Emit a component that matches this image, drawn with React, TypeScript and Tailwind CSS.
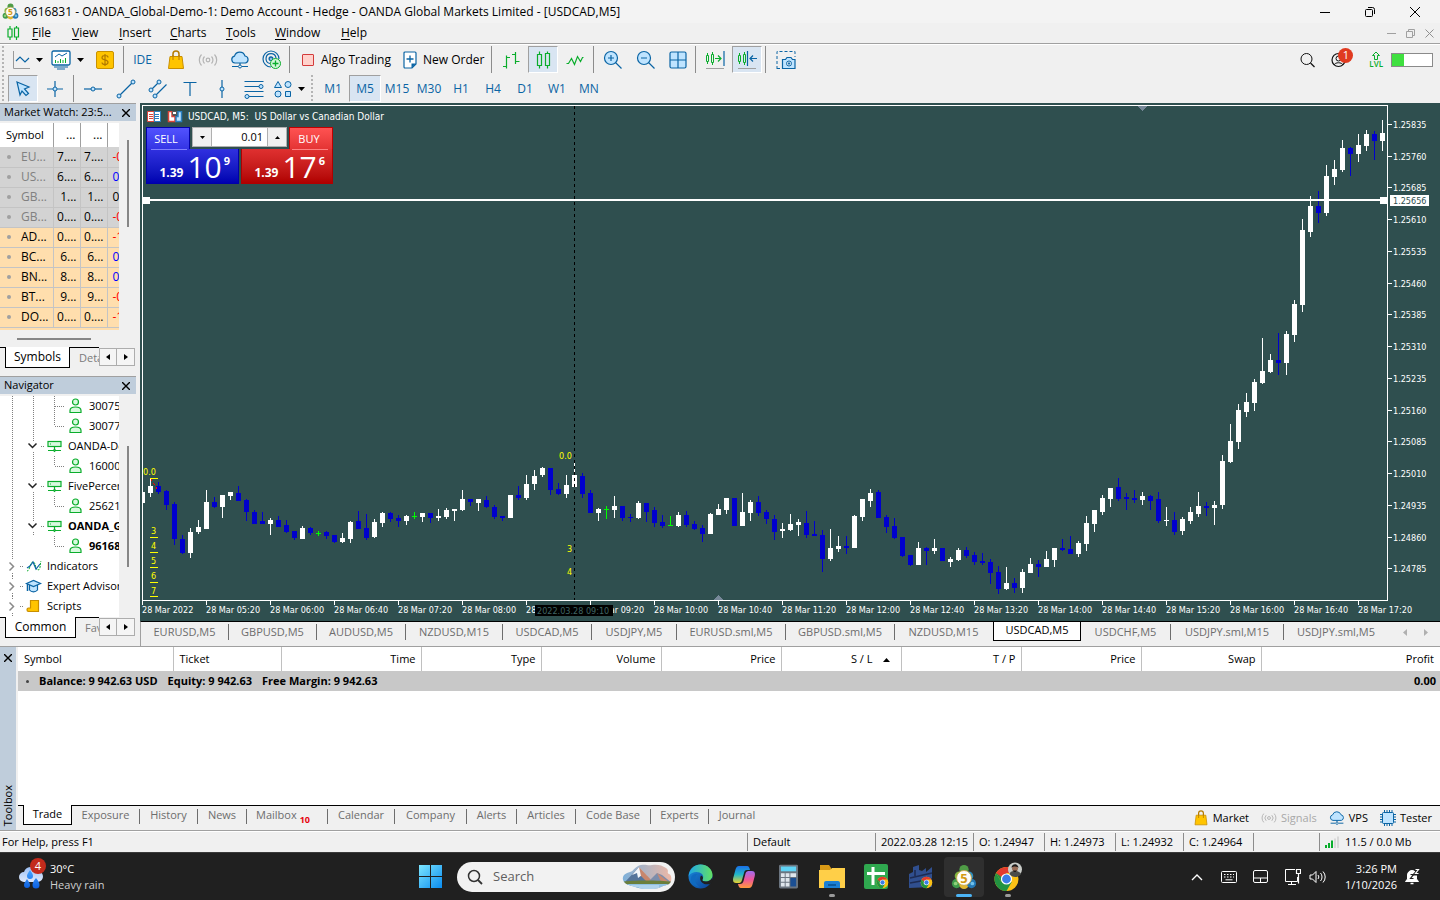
import React from 'react';

type Candle = [string, number, number, number, number];

// kind (W up, B down, G doji), high, body top, body bottom, low
const CANDLES: Candle[] = [
  ['W', 492, 492, 503, 503], ['W', 478, 486, 493, 497], ['B', 482, 486, 492, 494], ['B', 490, 491, 505, 510],
  ['B', 502, 504, 539, 545], ['B', 535, 539, 553, 554], ['W', 528, 532, 553, 558], ['W', 520, 527, 532, 534],
  ['W', 490, 502, 529, 529], ['B', 497, 502, 507, 508], ['W', 495, 495, 507, 518], ['W', 492, 492, 496, 500],
  ['B', 486, 493, 501, 501], ['B', 499, 500, 512, 521], ['B', 510, 512, 524, 524], ['B', 512, 521, 524, 524],
  ['W', 518, 520, 524, 535], ['B', 516, 520, 527, 527], ['B', 520, 525, 532, 533], ['B', 531, 531, 538, 540],
  ['W', 526, 528, 539, 539], ['B', 527, 528, 533, 535], ['G', 531, 533, 534, 536], ['B', 531, 532, 536, 539],
  ['B', 535, 535, 542, 543], ['W', 533, 538, 542, 543], ['W', 521, 522, 539, 543], ['B', 511, 521, 529, 529],
  ['B', 514, 528, 538, 540], ['W', 519, 522, 537, 538], ['W', 512, 513, 523, 527], ['B', 512, 513, 519, 522],
  ['B', 515, 518, 521, 527], ['W', 515, 516, 521, 525], ['G', 512, 516, 517, 519], ['W', 513, 513, 517, 522],
  ['B', 513, 513, 518, 523], ['W', 509, 516, 518, 521], ['W', 508, 510, 517, 519], ['W', 509, 509, 511, 521],
  ['W', 490, 499, 510, 511], ['B', 499, 499, 502, 506], ['W', 499, 499, 503, 511], ['B', 496, 500, 507, 508],
  ['B', 505, 507, 517, 519], ['B', 516, 516, 518, 521], ['W', 495, 495, 518, 518], ['B', 486, 495, 498, 500],
  ['W', 475, 484, 498, 500], ['W', 470, 476, 484, 490], ['W', 467, 468, 475, 477], ['B', 468, 468, 490, 495],
  ['B', 483, 489, 494, 495], ['W', 475, 485, 494, 498], ['W', 463, 475, 487, 487], ['B', 473, 476, 494, 498],
  ['B', 490, 493, 513, 513], ['W', 508, 509, 513, 521], ['G', 506, 509, 510, 519], ['W', 496, 506, 510, 518],
  ['B', 506, 506, 518, 521], ['B', 514, 517, 518, 522], ['W', 501, 503, 518, 519], ['B', 503, 503, 512, 522],
  ['B', 507, 510, 523, 527], ['B', 515, 522, 526, 528], ['G', 516, 525, 526, 526], ['W', 512, 515, 526, 527],
  ['B', 511, 515, 525, 527], ['B', 521, 524, 529, 530], ['B', 525, 528, 534, 542], ['W', 513, 514, 534, 534],
  ['W', 504, 509, 515, 515], ['W', 498, 498, 510, 514], ['B', 498, 498, 526, 526], ['W', 493, 512, 526, 526],
  ['W', 500, 502, 513, 521], ['B', 496, 502, 513, 516], ['B', 510, 512, 519, 524], ['B', 515, 519, 532, 540],
  ['W', 523, 529, 531, 538], ['W', 514, 524, 530, 531], ['W', 519, 522, 525, 536], ['B', 511, 523, 535, 538],
  ['B', 521, 534, 536, 536], ['B', 530, 535, 559, 572], ['W', 529, 548, 559, 561], ['W', 536, 546, 549, 552],
  ['B', 536, 546, 548, 554], ['W', 515, 516, 548, 548], ['W', 499, 499, 517, 521], ['W', 489, 493, 501, 507],
  ['B', 490, 492, 518, 518], ['B', 515, 517, 527, 533], ['B', 518, 526, 538, 539], ['B', 537, 537, 556, 557],
  ['B', 555, 555, 565, 566], ['W', 542, 548, 565, 565], ['B', 547, 548, 551, 565], ['W', 539, 548, 551, 554],
  ['B', 548, 548, 561, 561], ['W', 557, 559, 562, 567], ['W', 548, 550, 560, 561], ['B', 547, 550, 556, 558],
  ['B', 552, 555, 562, 565], ['B', 553, 561, 563, 565], ['B', 559, 562, 573, 584], ['B', 566, 572, 589, 594],
  ['W', 567, 583, 589, 590], ['B', 578, 583, 588, 593], ['W', 569, 572, 588, 593], ['W', 558, 564, 573, 573],
  ['B', 560, 564, 567, 577], ['W', 551, 559, 567, 567], ['W', 548, 548, 560, 567], ['B', 539, 548, 550, 551],
  ['B', 536, 549, 554, 554], ['W', 541, 543, 554, 557], ['W', 516, 523, 544, 551], ['W', 510, 510, 524, 532],
  ['W', 495, 498, 512, 515], ['W', 488, 488, 499, 507], ['B', 478, 487, 499, 501], ['B', 493, 497, 499, 510],
  ['B', 490, 498, 500, 503], ['W', 492, 496, 500, 505], ['B', 495, 496, 501, 510], ['B', 492, 499, 521, 523],
  ['W', 507, 520, 521, 526], ['B', 512, 520, 532, 535], ['W', 517, 519, 531, 535], ['W', 507, 512, 521, 524],
  ['W', 492, 506, 514, 517], ['B', 502, 506, 508, 516], ['W', 501, 505, 508, 525], ['W', 455, 461, 505, 509],
  ['W', 424, 441, 462, 463], ['W', 404, 410, 442, 449], ['W', 393, 402, 412, 417], ['W', 379, 382, 403, 411],
  ['W', 338, 371, 383, 384], ['W', 354, 360, 372, 373], ['B', 333, 360, 363, 375], ['W', 331, 334, 363, 375],
  ['W', 300, 304, 335, 342], ['W', 219, 230, 305, 312], ['W', 196, 206, 232, 237], ['B', 191, 206, 213, 223],
  ['W', 165, 176, 213, 216], ['W', 160, 169, 177, 185], ['W', 140, 148, 170, 172], ['B', 147, 148, 154, 176],
  ['W', 134, 145, 154, 162], ['W', 130, 134, 146, 151], ['B', 131, 134, 141, 160], ['W', 120, 133, 141, 151],
];

const CANDLE_FILL: Record<string, string> = { W: '#ffffff', B: '#0000cd', G: '#00ff00' };

const PRICES: [string, number][] = [
  ['1.25835', 124], ['1.25760', 156], ['1.25685', 187], ['1.25610', 219], ['1.25535', 251],
  ['1.25460', 283], ['1.25385', 314], ['1.25310', 346], ['1.25235', 378], ['1.25160', 410],
  ['1.25085', 441], ['1.25010', 473], ['1.24935', 505], ['1.24860', 537], ['1.24785', 568],
];

const TIMES = [
  '28 Mar 2022', '28 Mar 05:20', '28 Mar 06:00', '28 Mar 06:40', '28 Mar 07:20', '28 Mar 08:00', '28 Mar 08:40',
  '28 Mar 09:20', '28 Mar 10:00', '28 Mar 10:40', '28 Mar 11:20', '28 Mar 12:00', '28 Mar 12:40', '28 Mar 13:20',
  '28 Mar 14:00', '28 Mar 14:40', '28 Mar 15:20', '28 Mar 16:00', '28 Mar 16:40', '28 Mar 17:20',
];

const CHART_TABS = [
  { name: 'EURUSD,M5', width: 'w-[88px]' },
  { name: 'GBPUSD,M5', width: 'w-[88px]' },
  { name: 'AUDUSD,M5', width: 'w-[89px]' },
  { name: 'NZDUSD,M15', width: 'w-[97px]' },
  { name: 'USDCAD,M5', width: 'w-[89px]' },
  { name: 'USDJPY,M5', width: 'w-[85px]' },
  { name: 'EURUSD.sml,M5', width: 'w-[109px]' },
  { name: 'GBPUSD.sml,M5', width: 'w-[109px]' },
  { name: 'NZDUSD,M15', width: 'w-[98px]' },
  { name: 'USDCAD,M5', width: 'w-[88px]', active: true },
  { name: 'USDCHF,M5', width: 'w-[90px]' },
  { name: 'USDJPY.sml,M15', width: 'w-[113px]' },
  { name: 'USDJPY.sml,M5', width: 'w-[105px]' },
];

const SYMBOLS = [
  { name: 'EU...', bid: '7....', ask: '7....', change: '-0', tone: 'text-[#ff0000]', off: true },
  { name: 'US...', bid: '6....', ask: '6....', change: '0.', tone: 'text-[#0000ff]', off: true },
  { name: 'GB...', bid: '1...', ask: '1...', change: '0.', tone: 'text-black', off: true },
  { name: 'GB...', bid: '0....', ask: '0....', change: '-0', tone: 'text-[#ff0000]', off: true },
  { name: 'AD...', bid: '0....', ask: '0....', change: '-1', tone: 'text-[#ff0000]' },
  { name: 'BC...', bid: '6...', ask: '6...', change: '0.', tone: 'text-[#0000ff]' },
  { name: 'BN...', bid: '8...', ask: '8...', change: '0.', tone: 'text-[#0000ff]' },
  { name: 'BT...', bid: '9...', ask: '9...', change: '-0', tone: 'text-[#ff0000]' },
  { name: 'DO...', bid: '0....', ask: '0....', change: '-1', tone: 'text-[#ff0000]' },
];

const TREE = [
  { cells: ['v', 'v', 't', 'user'], label: '30075' },
  { cells: ['v', 'v', 'l', 'user'], label: '30077' },
  { cells: ['v', 'open', 'server'], label: 'OANDA-Demo' },
  { cells: ['v', 'v', 'l', 'user'], label: '16000' },
  { cells: ['v', 'open', 'server'], label: 'FivePercent' },
  { cells: ['v', 'v', 'l', 'user'], label: '25621' },
  { cells: ['v', 'open', 'server'], label: 'OANDA_Global', bold: true },
  { cells: ['v', 'none', 'l', 'user'], label: '96168', bold: true },
  { cells: ['closed', 'indicator'], label: 'Indicators' },
  { cells: ['closed', 'expert'], label: 'Expert Advisors' },
  { cells: ['closed', 'script'], label: 'Scripts' },
];

const ORDER_COLUMNS = [
  { name: 'Symbol', width: 'w-[155px]', align: 'text-left' },
  { name: 'Ticket', width: 'w-[108px]', align: 'text-left' },
  { name: 'Time', width: 'w-[140px]', align: 'text-right' },
  { name: 'Type', width: 'w-[120px]', align: 'text-right' },
  { name: 'Volume', width: 'w-[120px]', align: 'text-right' },
  { name: 'Price', width: 'w-[120px]', align: 'text-right' },
  { name: 'S / L', width: 'w-[120px]', align: 'text-right', sorted: true },
  { name: 'T / P', width: 'w-[120px]', align: 'text-right' },
  { name: 'Price', width: 'w-[120px]', align: 'text-right' },
  { name: 'Swap', width: 'w-[120px]', align: 'text-right' },
  { name: 'Profit', width: '', align: 'text-right' },
];

const TOOLBOX_TABS = [
  { name: 'Exposure', width: 'w-[68px]' },
  { name: 'History', width: 'w-[58px]' },
  { name: 'News', width: 'w-[49px]' },
  { name: 'Mailbox', width: 'w-[81px]', count: 10 },
  { name: 'Calendar', width: 'w-[67px]' },
  { name: 'Company', width: 'w-[72px]' },
  { name: 'Alerts', width: 'w-[50px]' },
  { name: 'Articles', width: 'w-[59px]' },
  { name: 'Code Base', width: 'w-[75px]' },
  { name: 'Experts', width: 'w-[58px]' },
  { name: 'Journal', width: 'w-[57px]' },
];

const BLUE = '#0a64a4';
const SKY = '#bfe4ff';
const GREEN = '#0aad2c';

interface IconProps {
  w?: number;
  h?: number;
  box?: string;
  className?: string;
  children: React.ReactNode;
}

function Icon({ w = 20, h = 20, box, className = '', children }: IconProps) {
  return (
    <svg
      width={w}
      height={h}
      viewBox={box || `0 0 ${w} ${h}`}
      fill="none"
      stroke={BLUE}
      className={`shrink-0 ${className}`}
      aria-hidden="true"
    >
      {children}
    </svg>
  );
}

function Caret() {
  return (
    <Icon w={7} h={4}>
      <path d="M0 0h7L3.500 4z" fill="#000" stroke="none" />
    </Icon>
  );
}

function BagIcon({ size = 20 }: { size?: number }) {
  return (
    <Icon w={size} h={size} box="0 0 20 20">
      <path d="M7 8V4a3 3 0 0 1 6 0v4" stroke="#b57b00" strokeWidth="1.500" />
      <path d="M4 6.500h12l1.500 12h-15z" fill="#ffc400" stroke="#c98f00" />
      <path d="M7 10V5M13 10V5" stroke="#b57b00" />
    </Icon>
  );
}

function SignalIcon({ size = 20 }: { size?: number }) {
  return (
    <Icon w={size} h={size} box="0 0 20 20">
      <g stroke="#b4b4b4" strokeWidth="1.200">
        <circle cx="10" cy="10" r="1.800" />
        <path d="M6.500 6.500a5 5 0 0 0 0 7M13.500 6.500a5 5 0 0 1 0 7M3.500 4.500a8 8 0 0 0 0 11M16.500 4.500a8 8 0 0 1 0 11" />
      </g>
    </Icon>
  );
}

function CloudIcon({ size = 20 }: { size?: number }) {
  return (
    <Icon w={size} h={size} box="0 0 20 20">
      <path d="M5 13a3.500 3.500 0 0 1-.5-6.900A5.500 5.500 0 0 1 15 6a3.600 3.600 0 0 1 .5 7z" fill={SKY} strokeWidth="1.200" />
      <path d="M10 13v2M2 16.500h6M12 16.500h6" strokeWidth="1.200" />
      <circle cx="10" cy="16.500" r="1.500" />
    </Icon>
  );
}

function CandlesIcon() {
  return (
    <Icon>
      <path d="M6.500 1.500v3M6.500 15.500v3M14.500 1.500v2M14.500 15.500v3" stroke={GREEN} strokeWidth="1.200" />
      <path d="M4.500 4.500h4v11h-4zM12.500 3.500h4v12h-4z" stroke={GREEN} strokeWidth="1.200" />
    </Icon>
  );
}

function SmallCandles() {
  return (
    <g stroke={GREEN}>
      <path d="M2.500 3v2M2.500 12v2M7.500 2v2M7.500 13v2" />
      <path d="M1.500 5.500h2v6h-2zM6.500 4.500h2v8h-2z" />
    </g>
  );
}

interface ToolProps {
  label: string;
  width: string;
  active?: boolean;
  children: React.ReactNode;
}

function Tool({ label, width, active, children }: ToolProps) {
  return (
    <button
      aria-label={label}
      className={`flex h-full shrink-0 items-center justify-center gap-1.5 ${width} ${active
        ? 'border border-t-[#a0a0a0] border-l-[#a0a0a0] border-r-white border-b-white bg-[#d9e5f2]'
        : ''
        }`}
    >
      {children}
    </button>
  );
}

function Separator() {
  return <span className="mx-px h-full w-px shrink-0 bg-[#8c8c8c]" />;
}

function Grip() {
  return <span className="ml-0.5 mr-1 h-full w-0.5 shrink-0 bg-[repeating-linear-gradient(#b4b4b4_0_2px,transparent_2px_4px)]" />;
}

function MetaLogo({ size }: { size: number }) {
  return (
    <svg width={size} height={size} viewBox="0 0 28 28" className="shrink-0" aria-hidden="true">
      <circle cx="14" cy="6" r="5" fill="#4f9c46" />
      <circle cx="9" cy="13" r="5" fill="#7cb53f" />
      <circle cx="19" cy="13" r="5" fill="#2f8fc0" />
      <circle cx="6" cy="21" r="5" fill="#3f9b4c" />
      <circle cx="14" cy="22" r="5" fill="#e2b72f" />
      <circle cx="22" cy="21" r="5" fill="#2478b5" />
      <circle cx="5" cy="21" r="2" fill="#8fd07a" />
      <circle cx="23" cy="21" r="2" fill="#6fc0ea" />
      <circle cx="14" cy="15" r="8" fill="#fdfdf8" stroke="#c9a648" />
      <text x="14" y="20" textAnchor="middle" fontSize="14" fontWeight="700" fill="#d49a13" fontFamily="Open Sans, sans-serif">5</text>
    </svg>
  );
}

function TitleBar() {
  return (
    <header className="flex h-[23px] shrink-0 items-center bg-[#f3f3f3] text-black">
      <span className="flex w-6 justify-start pl-0.5"><MetaLogo size={17} /></span>
      <h1 className="truncate text-[12px]">
        9616831 - OANDA_Global-Demo-1: Demo Account - Hedge - OANDA Global Markets Limited - [USDCAD,M5]
      </h1>
      <div className="ml-auto flex h-full items-center pr-0.5">
        <button aria-label="Minimize" className="flex w-[45px] justify-center">
          <Icon w={12} h={12}><path d="M1 6.500h10" stroke="#000" /></Icon>
        </button>
        <button aria-label="Restore" className="flex w-[45px] justify-center">
          <Icon w={12} h={12}>
            <rect x="1.500" y="3.500" width="7" height="7" rx="1" stroke="#000" />
            <path d="M4 1.500h4.500a2 2 0 0 1 2 2V8" stroke="#000" />
          </Icon>
        </button>
        <button aria-label="Close" className="flex w-[46px] justify-center">
          <Icon w={12} h={12}><path d="M1 1l10 10M11 1L1 11" stroke="#000" /></Icon>
        </button>
      </div>
    </header>
  );
}

function MenuBar() {
  const items = [
    ['File', 'w-10'], ['View', 'w-[47px]'], ['Insert', 'w-[51px]'], ['Charts', 'w-14'],
    ['Tools', 'w-[49px]'], ['Window', 'w-[66px]'], ['Help', 'w-10'],
  ];
  return (
    <nav className="flex h-[21px] shrink-0 items-center border-b border-[#a0a0a0] bg-[#f0f0f0] text-xs text-black">
      <span className="flex w-8 pl-1.5">
        <Icon w={14} h={16}>
          <path d="M4 1v3M4 12v3M10.500 1v2M10.500 12v3M2 4h4v8H2zM8.500 3h4v9h-4z" stroke={GREEN} strokeWidth="1.200" />
        </Icon>
      </span>
      {items.map(([name, width]) => (
        <button key={name} className={`shrink-0 text-left ${width}`}>
          <u className="underline-offset-2">{name[0]}</u>{name.slice(1)}
        </button>
      ))}
      <div className="ml-auto flex items-center gap-2 pr-[5px]">
        <Icon w={11} h={11}><path d="M1 5.500h9" stroke="#a0a0a0" /></Icon>
        <Icon w={11} h={11}>
          <path d="M1.500 3.500h6v6h-6zM3.500 3V1.500h6v6H8" stroke="#a0a0a0" />
        </Icon>
        <Icon w={11} h={11}><path d="M1.500 1.500l8 8M9.500 1.500l-8 8" stroke="#909090" /></Icon>
      </div>
    </nav>
  );
}

function MainToolbar() {
  return (
    <div className="flex h-[27px] items-center">
      <Grip />
      <Tool label="Line studies" width="w-[39px]">
        <Icon w={18}>
          <path d="M1.500 1v17.500H18" stroke="#9a9a9a" />
          <path d="M4 11l4-4 5 5 4-4" strokeWidth="1.200" />
        </Icon>
        <Caret />
      </Tool>
      <Tool label="Chart templates" width="w-[41px]">
        <Icon w={20}>
          <rect x="1" y="1" width="18" height="14" rx="1.500" fill="#fff" strokeWidth="1.300" />
          <path d="M4 7l4-3 3 2 5-3" />
          <path d="M4.500 10v3M7 11v2M9.500 9v4M12 10v3M14.500 8v5" stroke={GREEN} />
          <path d="M3 17h14M6 19h8" />
        </Icon>
        <Caret />
      </Tool>
      <Tool label="Payments" width="w-[34px]">
        <Icon w={18} h={18}>
          <rect x=".5" y=".5" width="17" height="17" rx="1.500" fill="#ffc400" stroke="#c99200" />
          <path d="M12 6.500c0-1.200-1-2-3-2s-3 .8-3 2.200c0 3 6 1.500 6 4.600 0 1.300-1 2.200-3 2.200s-3-.8-3-2M9 3v12" stroke="#b27a00" strokeWidth="1.200" />
        </Icon>
      </Tool>
      <Separator />
      <Tool label="IDE" width="w-[35px]"><span className="text-[12px] text-[#0a64a4]">IDE</span></Tool>
      <Tool label="Market" width="w-8"><BagIcon /></Tool>
      <Tool label="Signals" width="w-8"><SignalIcon /></Tool>
      <Tool label="VPS" width="w-8"><CloudIcon /></Tool>
      <Tool label="Community" width="w-8">
        <Icon>
          <path d="M9 17a8 8 0 1 1 8-8M8 13.500A5 5 0 1 1 14 8M8 10.500A2 2 0 1 1 11 8.500" strokeWidth="1.200" />
          <circle cx="9" cy="9" r="1.500" fill={SKY} />
          <circle cx="13.500" cy="13.500" r="5" fill="#d6f7dc" stroke={GREEN} />
          <path d="M13.500 10.500v6M10.500 13.500h6" stroke={GREEN} strokeWidth="1.300" />
        </Icon>
      </Tool>
      <Separator />
      <button className="flex h-full w-[103px] shrink-0 items-center gap-[7px] pl-[11px] text-[12px] whitespace-nowrap">
        <span className="h-3 w-3 shrink-0 rounded-[1px] border border-[#d33b3b] bg-[#ffd2cc]" />
        Algo Trading
      </button>
      <button className="flex h-full w-24 shrink-0 items-center gap-1.5 pl-[9px] text-[12px] whitespace-nowrap">
        <Icon w={14} h={18}>
          <path d="M2 1h10a1 1 0 0 1 1 1v11l-4 4H2a1 1 0 0 1-1-1V2a1 1 0 0 1 1-1z" fill="#fff" strokeWidth="1.200" />
          <path d="M7 4.500v7M3.500 8h7" strokeWidth="1.300" />
          <path d="M13 12.500L8.500 17v-4.500z" fill={BLUE} stroke="none" />
        </Icon>
        New Order
      </button>
      <Separator />
      <Tool label="Bar chart" width="w-[35px]">
        <Icon>
          <path d="M5.500 5.500v13M2 16.500h3.500M5.500 7.500H9M14.500 2v12M11 4.500h3.500M14.500 11.500h4" stroke={GREEN} strokeWidth="1.200" />
        </Icon>
      </Tool>
      <Tool label="Candlesticks" width="w-[30px]" active><CandlesIcon /></Tool>
      <Tool label="Line chart" width="w-[34px]">
        <Icon><path d="M1.500 13.500h2l3-5 3 6 3-8 3 5 2-4h1" stroke={GREEN} strokeWidth="1.200" /></Icon>
      </Tool>
      <Separator />
      <Tool label="Zoom in" width="w-9">
        <Icon>
          <circle cx="8" cy="8" r="6.500" fill={SKY} strokeWidth="1.200" />
          <path d="M12.500 12.500l6 6M8 5v6M5 8h6" strokeWidth="1.200" />
        </Icon>
      </Tool>
      <Tool label="Zoom out" width="w-[30px]">
        <Icon>
          <circle cx="8" cy="8" r="6.500" fill={SKY} strokeWidth="1.200" />
          <path d="M12.500 12.500l6 6M5 8h6" strokeWidth="1.200" />
        </Icon>
      </Tool>
      <Tool label="Tile windows" width="w-[33px]">
        <Icon w={18} h={18}>
          <rect x="1" y="1" width="16" height="16" rx="1.500" fill={SKY} strokeWidth="1.200" />
          <path d="M9 1v16M1 9h16" strokeWidth="1.200" />
        </Icon>
      </Tool>
      <Separator />
      <Tool label="Auto scroll" width="w-[35px]">
        <Icon>
          <SmallCandles />
          <path d="M10 8.500h6M13 5.500l3 3-3 3" stroke={GREEN} strokeWidth="1.200" />
          <path d="M19 1v15" strokeWidth="1.200" />
          <path d="M1 18.500h18" stroke="#a0a0a0" />
        </Icon>
      </Tool>
      <Tool label="Chart shift" width="w-[30px]" active>
        <Icon>
          <SmallCandles />
          <path d="M10.500 1v15M13 8.500h7M16 5.500l-3 3 3 3" strokeWidth="1.200" />
          <path d="M1 18.500h18" stroke="#a0a0a0" />
        </Icon>
      </Tool>
      <span className="w-0.5 shrink-0" />
      <Separator />
      <Tool label="Screenshot" width="w-[38px]">
        <Icon>
          <path d="M1 19V1.500h18V7" strokeDasharray="3 2" />
          <path d="M1 18.500h5" strokeDasharray="3 2" />
          <path d="M6.500 9.500h3L11 7.500h4l1.500 2H19v9H6.500z" fill={SKY} strokeWidth="1.200" />
          <circle cx="13" cy="13.500" r="2.500" fill="#fff" />
          <circle cx="13" cy="13.500" r=".8" fill={BLUE} />
        </Icon>
      </Tool>
      <div className="ml-auto flex items-center pr-[7px]">
        <button aria-label="Search" className="mr-4">
          <Icon w={16} h={16}>
            <circle cx="7.500" cy="7" r="5.500" stroke="#111" />
            <path d="M11.500 11l4 4" stroke="#111" strokeWidth="1.300" />
          </Icon>
        </button>
        <button aria-label="Account, 1 notification" className="relative mr-[23px]">
          <Icon w={15} h={16}>
            <circle cx="7.500" cy="8" r="6.500" stroke="#111" strokeWidth="1.200" />
            <circle cx="7.500" cy="6.500" r="2.500" stroke="#111" />
            <path d="M3 13c1-3 8-3 9 0" stroke="#111" />
          </Icon>
          <span className="absolute -top-1 left-[7px] flex h-[15px] w-[15px] items-center justify-center rounded-full bg-[#e03a20] text-[11px] text-white">1</span>
        </button>
        <div className="mr-2 flex flex-col items-center">
          <Icon w={10} h={9}>
            <path d="M5 1l3.500 3.500H6.500v4h-3v-4H1.500z" stroke={GREEN} />
          </Icon>
          <span className="text-[8px] leading-[8px] font-semibold text-[#0aad2c]">LVL</span>
        </div>
        <div className="h-[14px] w-[42px] border border-[#8a8a8a] bg-white">
          <div className="h-full w-3 bg-[#3fe03f]" />
        </div>
      </div>
    </div>
  );
}

function DrawingToolbar() {
  const frames = ['M1', 'M5', 'M15', 'M30', 'H1', 'H4', 'D1', 'W1', 'MN'];
  return (
    <div className="mt-0.5 flex h-[27px] items-center">
      <Grip />
      <Tool label="Cursor" width="w-[30px]" active>
        <Icon w={18} h={18}><path d="M3 2l12 5-4.500 2 4 4.500-2.500 2-4-4.500-2 4z" fill={SKY} strokeWidth="1.200" /></Icon>
      </Tool>
      <Tool label="Crosshair" width="w-[34px]">
        <Icon>
          <path d="M2 10h6M12 10h6M10 2v6M10 12v6" strokeWidth="1.200" />
          <circle cx="10" cy="10" r="2" fill={SKY} />
        </Icon>
      </Tool>
      <Separator />
      <Tool label="Horizontal line" width="w-[35px]">
        <Icon><path d="M1 10h18" strokeWidth="1.200" /><circle cx="10" cy="10" r="2" fill={SKY} /></Icon>
      </Tool>
      <Tool label="Trend line" width="w-8">
        <Icon>
          <path d="M3 17L17 3" strokeWidth="1.200" />
          <circle cx="3" cy="17" r="2" fill={SKY} /><circle cx="17" cy="3" r="2" fill={SKY} />
        </Icon>
      </Tool>
      <Tool label="Channel" width="w-8">
        <Icon>
          <path d="M3 11l8-8M7 17L18.500 5.500" strokeWidth="1.200" />
          <circle cx="3" cy="11" r="2" fill={SKY} /><circle cx="11" cy="3" r="2" fill={SKY} /><circle cx="7" cy="17" r="2" fill={SKY} />
        </Icon>
      </Tool>
      <Tool label="Text" width="w-8">
        <Icon><path d="M3.500 3.500h13M10 3.500V17" strokeWidth="1.200" /></Icon>
      </Tool>
      <Tool label="Vertical line" width="w-8">
        <Icon><path d="M10 1v18" strokeWidth="1.200" /><circle cx="10" cy="10" r="2" fill={SKY} /></Icon>
      </Tool>
      <Tool label="Fibonacci" width="w-8">
        <Icon>
          <path d="M.5 2.500h19M.5 7.500h17M.5 12.500h19M3 17.500h16.500" />
          <circle cx="17" cy="7.500" r="2" fill={SKY} /><circle cx="3" cy="17.500" r="2" fill={SKY} />
        </Icon>
      </Tool>
      <Tool label="Shapes" width="w-[39px]">
        <Icon w={18} h={18}>
          <path d="M4 1.500l3.500 6h-7zM11.500 11.500h5v5h-5z" fill={SKY} />
          <circle cx="14" cy="4.500" r="3" fill={SKY} /><circle cx="4" cy="14" r="3" fill={SKY} />
        </Icon>
        <Caret />
      </Tool>
      <Grip />
      {frames.map((frame) => (
        <Tool key={frame} label={frame} width="w-8" active={frame === 'M5'}>
          <span className="text-[12px] text-[#0a64a4]">{frame}</span>
        </Tool>
      ))}
    </div>
  );
}

function PanelHeader({ title }: { title: string }) {
  return (
    <div className="flex h-[18px] shrink-0 items-center justify-between border-t border-[#a0a0a0] bg-[#bfcddb] pl-1 pr-1.5 text-[11px]">
      <h2 className="truncate">{title}</h2>
      <button aria-label={`Close ${title}`}>
        <Icon w={8} h={8}><path d="M0 0l8 8M8 0L0 8" stroke="#000" strokeWidth="1.400" /></Icon>
      </button>
    </div>
  );
}

function PanelTabs({ active, next, width }: { active: string; next: string; width: string }) {
  return (
    <div className="flex h-[21px] shrink-0 text-[12px]">
      <span className="w-[5px] shrink-0 border-t border-black" />
      <button className={`h-full shrink-0 border border-t-0 border-black bg-white ${width}`}>{active}</button>
      <button className="h-full min-w-0 flex-1 overflow-hidden border-t border-black pl-[9px] text-left text-[11px] text-[#7a7a7a]">{next}</button>
      <div className="mr-px flex h-[19px] shrink-0 pt-px">
        <button aria-label="Previous tab" className="flex h-[18px] w-[18px] items-center justify-center border border-[#adadad] bg-[#f5f5f5]">
          <Icon w={4} h={6}><path d="M4 0v6L0 3z" fill="#000" stroke="none" /></Icon>
        </button>
        <button aria-label="Next tab" className="-ml-px flex h-[18px] w-[19px] items-center justify-center border border-[#adadad] bg-[#f5f5f5]">
          <Icon w={4} h={6}><path d="M0 0v6l4-3z" fill="#000" stroke="none" /></Icon>
        </button>
      </div>
    </div>
  );
}

function MarketWatch() {
  return (
    <section className="flex w-[136px] flex-col">
      <PanelHeader title="Market Watch: 23:5..." />
      <div className="mt-0.5 flex h-[207px]">
        <div className="w-[119px] overflow-hidden bg-[#ffdead]">
          <table className="w-[135px] table-fixed border-collapse text-[12px] leading-4 whitespace-nowrap">
            <thead>
              <tr className="h-6 bg-white">
                <th className="w-[53px] border-r border-[#a0a0a0] pl-1.5 text-left text-[11px] font-normal">Symbol</th>
                <th className="w-[27px] border-r border-[#a0a0a0] pr-1 text-right font-normal">...</th>
                <th className="w-[27px] border-r border-[#a0a0a0] pr-1 text-right font-normal">...</th>
                <th className="w-[28px]" />
              </tr>
            </thead>
            <tbody>
              {SYMBOLS.map((row, i) => (
                <tr key={i} className={`h-5 border-b border-[#c4c4c4] ${row.off ? 'bg-[#d3d3d3]' : 'bg-[#ffdead]'}`}>
                  <td className={`border-r border-[#c4c4c4] ${row.off ? 'text-[#808080]' : 'text-black'}`}>
                    <span className="flex items-center gap-2.5 pl-[7px]">
                      <i className="h-1 w-1 rounded-full bg-[#a0a0a0]" />
                      {row.name}
                    </span>
                  </td>
                  <td className="border-r border-[#c4c4c4] pr-[3px] text-right">{row.bid}</td>
                  <td className="border-r border-[#c4c4c4] pr-[3px] text-right">{row.ask}</td>
                  <td className={`pl-[5px] ${row.tone}`}>{row.change}</td>
                </tr>
              ))}
            </tbody>
          </table>
        </div>
        <div className="ml-2 mt-[17px] h-[87px] w-0.5 bg-[#868686]" />
      </div>
      <div className="ml-[17px] mt-2 h-0.5 w-[74px] bg-[#868686]" />
      <div className="mt-[7px]"><PanelTabs active="Symbols" next="Details" width="w-[65px]" /></div>
    </section>
  );
}

function TreeCell({ kind }: { kind: string }) {
  const dots = { stroke: '#808080', strokeDasharray: '1 1' };
  return (
    <Icon w={21} h={20}>
      {kind === 'v' && <path d="M10.500 0v20" {...dots} />}
      {kind === 't' && <path d="M10.500 0v20M11 10.500h10" {...dots} />}
      {kind === 'l' && <path d="M10.500 0v10M11 10.500h10" {...dots} />}
      {kind === 'open' && (
        <>
          <path d="M10.500 0v5M10.500 16v4M18 10.500h3" {...dots} />
          <path d="M5.500 7.500l4 4 4-4" stroke="#222" strokeWidth="1.500" />
        </>
      )}
      {kind === 'closed' && (
        <>
          <path d="M10.500 0v4M10.500 17v3M18 10.500h3" {...dots} />
          <path d="M7.500 6.500l4 4-4 4" stroke="#8a8a8a" strokeWidth="1.500" />
        </>
      )}
      {kind === 'user' && (
        <g stroke={GREEN} fill="#d8fadf" strokeWidth="1.200">
          <circle cx="10.500" cy="6" r="3" />
          <path d="M5 16.500v-2c0-2.500 2-3.500 5.500-3.500s5.500 1 5.500 3.500v2z" />
        </g>
      )}
      {kind === 'server' && (
        <g stroke={GREEN} strokeWidth="1.200">
          <rect x="4" y="5.500" width="13" height="5" fill="#d8fadf" />
          <path d="M6 8h1M10.500 10.500v3M4 14.500h5M12 14.500h5M9.500 14.500l1-1.500 1 1.500-1 1z" />
        </g>
      )}
      {kind === 'indicator' && (
        <>
          <path d="M4 15c3 0 3-9 6-9s2 8 5 8 2-8 3-9" strokeDasharray="2 1" stroke={GREEN} />
          <path d="M4 12l3-2 3-4 3 7 4-5" strokeWidth="1.200" />
        </>
      )}
      {kind === 'expert' && (
        <>
          <path d="M6.500 9v5c2 2.500 6 2.500 8 0V9" fill={SKY} strokeWidth="1.200" />
          <path d="M3.500 7.500l7-3 7 3-7 3z" fill={SKY} strokeWidth="1.200" />
          <path d="M4.500 8v7" strokeWidth="1.500" />
        </>
      )}
      {kind === 'script' && (
        <path d="M7.500 4.500h8v11H5.500c-2 0-2-3.500 0-3.500h2z" fill="#ffc400" stroke="#c98f00" strokeWidth="1.200" />
      )}
    </Icon>
  );
}

function Navigator() {
  return (
    <section className="mt-2 flex w-[136px] flex-col">
      <PanelHeader title="Navigator" />
      <div className="mt-0.5 flex h-[221px]">
        <ul className="w-[119px] overflow-hidden bg-white pl-0.5 text-[11px]">
          {TREE.map((row) => (
            <li key={row.label} className={`flex h-5 items-center whitespace-nowrap ${row.bold ? 'font-bold' : ''}`}>
              {row.cells.map((cell, i) => <TreeCell key={i} kind={cell} />)}
              <span className="pl-[3px]">{row.label}</span>
            </li>
          ))}
        </ul>
        <div className="ml-2 mt-[50px] h-[121px] w-0.5 bg-[#868686]" />
      </div>
      <PanelTabs active="Common" next="Favorites" width="w-[71px]" />
    </section>
  );
}

function PriceChart() {
  return (
    <svg
      viewBox="140 103 1300 518"
      preserveAspectRatio="xMinYMin meet"
      className="block h-[518px] w-full"
      fontFamily="DejaVu Sans Condensed, DejaVu Sans, sans-serif"
      fontSize="9"
      shapeRendering="crispEdges"
      role="img"
      aria-label="USDCAD M5 candlestick chart"
    >
      <g fill="#fff">
        <rect x="142" y="105" width="1246" height="1" />
        <rect x="142" y="105" width="1" height="496" />
        <rect x="1387" y="105" width="1" height="496" />
        <rect x="142" y="600" width="1246" height="1" />
      </g>
      <path d="M1138 106h9l-4.500 5zM714 600h9l-4.500-5z" fill="#778899" />

      {CANDLES.map(([kind, high, top, bottom, low], i) => {
        const x = 142 + i * 8;
        return (
          <g key={i} fill={CANDLE_FILL[kind]}>
            <rect x={x} y={high} width="1" height={low - high} />
            <rect x={i === 0 ? x : x - 2} y={top} width={i === 0 ? 3 : 5} height={bottom - top} />
          </g>
        );
      })}
      <path d="M574.500 106V600" stroke="#000" strokeDasharray="3 3" />

      <g fill="#fff">
        <rect x="143" y="199" width="1244" height="2" />
        <rect x="143" y="197" width="7" height="7" />
        <rect x="1380" y="197" width="7" height="7" />
        <rect x="1390" y="195" width="39" height="11" />
      </g>

      <path d="M151 479l7 12" stroke="#f00" strokeDasharray="2 3" />
      <g fill="#ff0">
        {[478, 537, 552, 567, 582, 596].map((y) => <rect key={y} x="150" y={y} width="8" height="1" />)}
        <text x="143" y="475">0.0</text>
        <text x="151" y="534">3</text>
        <text x="151" y="549">4</text>
        <text x="151" y="564">5</text>
        <text x="151" y="579">6</text>
        <text x="151" y="594">7</text>
        <text x="559" y="459">0.0</text>
        <text x="567" y="552">3</text>
        <text x="567" y="575">4</text>
      </g>

      <g fill="#fff">
        {PRICES.map(([price, y]) => (
          <React.Fragment key={price}>
            <rect x="1388" y={y} width="4" height="1" />
            <text x="1393" y={y + 4}>{price}</text>
          </React.Fragment>
        ))}
        {TIMES.map((time, i) => (
          <React.Fragment key={time}>
            <rect x={142 + i * 64} y="601" width="1" height="4" />
            <text x={142 + i * 64} y="613">{time}</text>
          </React.Fragment>
        ))}
      </g>
      <text x="1393" y="204" fill="#2f4f4f">1.25656</text>
      <rect x="535" y="605" width="78" height="11" fill="#000" />
      <text x="537" y="614" fill="#3f6464">2022.03.28 09:10</text>
    </svg>
  );
}

function OneClickPanel() {
  return (
    <div className="w-[187px] text-white">
      <div className="flex h-[22px] items-start">
        <button className="h-[22px] w-11 border border-b-0 border-[#0000a8] bg-gradient-to-b from-[#5252ff] to-[#3434e4] pr-1 text-[11px] leading-5">
          SELL
        </button>
        <div className="mx-0.5 flex h-5 min-w-0 flex-1 border border-[#b0b0b0] bg-white text-black">
          <button aria-label="Volume list" className="flex w-[19px] items-center justify-center border-r border-[#b0b0b0] bg-[#f0f0f0]">
            <Icon w={5} h={3}><path d="M0 0h5L2.500 3z" fill="#000" stroke="none" /></Icon>
          </button>
          <input aria-label="Volume" defaultValue="0.01" className="min-w-0 flex-1 pr-1 text-right text-[11px] leading-4 outline-none" />
          <button aria-label="Increase volume" className="flex w-[19px] items-center justify-center border-l border-[#b0b0b0] bg-[#f0f0f0]">
            <Icon w={5} h={3}><path d="M0 3h5L2.500 0z" fill="#000" stroke="none" /></Icon>
          </button>
        </div>
        <button className="h-[22px] w-11 border border-b-0 border-[#c00000] bg-gradient-to-b from-[#ff5252] to-[#e43434] pr-1 text-[11px] leading-5">
          BUY
        </button>
      </div>
      <div className="flex h-[35px] gap-0.5">
        <button aria-label="Sell at 1.39109" className="relative flex w-[93px] items-end justify-end border border-t-0 border-[#0000a8] bg-gradient-to-b from-[#3030e0] to-[#0000b0] pr-2">
          <span className="absolute left-1 top-0 w-9 border-t border-[#8080ff]" />
          <b className="pb-0.5 text-[12px] leading-4">1.39</b>
          <span className="pl-1 text-[30px] leading-8">10</span>
          <b className="self-start pl-0.5 pt-1 text-[11px] leading-4">9</b>
        </button>
        <button aria-label="Buy at 1.39176" className="relative flex w-[92px] items-end justify-end border border-t-0 border-[#b00000] bg-gradient-to-b from-[#e03030] to-[#b00000] pr-[7px]">
          <span className="absolute right-1 top-0 w-9 border-t border-[#ff8080]" />
          <b className="pb-0.5 text-[12px] leading-4">1.39</b>
          <span className="pl-1 text-[30px] leading-8">17</span>
          <b className="self-start pl-0.5 pt-1 text-[11px] leading-4">6</b>
        </button>
      </div>
    </div>
  );
}

function ChartWindow() {
  return (
    <section className="ml-1 flex min-w-0 flex-1 flex-col">
      <div className="relative overflow-hidden bg-[#2f4f4f]">
        <PriceChart />
        <div className="absolute left-1.5 top-2 flex flex-col gap-1">
          <div className="flex h-3 items-center whitespace-nowrap text-white">
            <Icon w={16} h={12} className="mr-[5px]">
              <path d="M1.500.5H8v10H1.500z" fill="#fff" stroke="#d9443a" />
              <path d="M8.500.5h6v10h-6z" fill="#fff" stroke="#2a7fc0" />
              <path d="M3 3.500h4M3 5.500h4M3 7.500h4" stroke="#d9443a" />
              <path d="M9 3.500h4M9 5.500h4M9 7.500h4" stroke="#2a7fc0" />
            </Icon>
            <Icon w={16} h={12} className="mr-[5px]">
              <path d="M1.500.5H5v5h3v5H1.500z" fill="#fff" stroke="#d9443a" strokeWidth="1.500" />
              <path d="M11 .5h3.500v10H9v-5h2z" fill="#bfe4ff" stroke="#2a7fc0" strokeWidth="1.500" />
              <path d="M5.500.5h4v3h-4z" fill="#fff" stroke="#555" />
            </Icon>
            <span className="font-['DejaVu_Sans_Condensed','DejaVu_Sans',sans-serif] text-[10px] leading-3 whitespace-pre">USDCAD, M5:  US Dollar vs Canadian Dollar</span>
          </div>
          <OneClickPanel />
        </div>
      </div>
      <div className="flex h-[25px] items-start overflow-hidden border-t border-l border-t-black border-l-[#a0a0a0] text-[11px] text-[#6d6d6d]">
        {CHART_TABS.map((tab, i) => tab.active ? (
          <button key={i} className={`-mt-px h-5 shrink-0 border border-t-0 border-black bg-white text-black ${tab.width}`}>
            {tab.name}
          </button>
        ) : (
          <button key={i} className={`mt-0.5 flex h-4 shrink-0 items-center justify-center border-r ${tab.width} ${i === 8 || i === 12 ? 'border-transparent' : 'border-[#6d6d6d]'}`}>
            {tab.name}
          </button>
        ))}
        <div className="ml-auto mt-[7px] flex gap-[17px] pr-3">
          <Icon w={4} h={7}><path d="M4 0v7L0 3.500z" fill="#b0b0b0" stroke="none" /></Icon>
          <Icon w={4} h={7}><path d="M0 0v7l4-3.500z" fill="#b0b0b0" stroke="none" /></Icon>
        </div>
      </div>
    </section>
  );
}

function Toolbox() {
  return (
    <section className="flex h-[185px] shrink-0 border-t border-b border-[#a0a0a0]">
      <div className="mr-0.5 flex w-4 shrink-0 flex-col items-center justify-between bg-[#bfcddb] pt-[7px] pb-1">
        <button aria-label="Close Toolbox">
          <Icon w={8} h={8}><path d="M0 0l8 8M8 0L0 8" stroke="#000" strokeWidth="1.400" /></Icon>
        </button>
        <h2 className="rotate-180 text-[11px] leading-4 [writing-mode:vertical-rl]">Toolbox</h2>
      </div>
      <div className="flex min-w-0 flex-1 flex-col">
        <div className="flex-1 bg-white">
          <table className="w-full table-fixed border-collapse text-[11px]">
            <thead>
              <tr className="h-6">
                {ORDER_COLUMNS.map((col, i) => (
                  <th key={i} className={`px-1.5 font-normal ${i < 10 ? 'border-r border-[#c0c0c0]' : ''} ${i > 0 && i < 10 ? 'pr-[5px]' : ''} ${col.width} ${col.align}`}>
                    {col.name}
                    {col.sorted && <span className="ml-2.5 mr-1.5 inline-block align-middle"><Icon w={7} h={4}><path d="M0 4h7L3.500 0z" fill="#000" stroke="none" /></Icon></span>}
                  </th>
                ))}
              </tr>
            </thead>
            <tbody>
              <tr className="h-5 bg-[#c8c8c8] font-bold">
                <td colSpan={10}>
                  <span className="flex items-center gap-2.5 pl-2">
                    <i className="h-[3px] w-[3px] rounded-full bg-[#444]" />
                    <span>Balance: 9 942.63 USD</span>
                    <span>Equity: 9 942.63</span>
                    <span>Free Margin: 9 942.63</span>
                  </span>
                </td>
                <td className="pr-1 text-right">0.00</td>
              </tr>
            </tbody>
          </table>
        </div>
        <div className="flex h-[25px] shrink-0 text-[11px] text-[#6d6d6d]">
          <span className="w-[5px] border-t border-black" />
          <button className="h-5 w-[49px] shrink-0 border border-t-0 border-black bg-white text-black">Trade</button>
          <div className="flex min-w-0 flex-1 border-t border-black">
            {TOOLBOX_TABS.map((tab, i) => (
              <button key={tab.name} className={`mt-[3px] flex h-[15px] shrink-0 items-center justify-center border-r pb-0.5 ${tab.width} ${i < 10 ? 'border-[#6d6d6d]' : 'border-transparent'}`}>
                {tab.name}
                {tab.count && <b className="pl-[3px] pt-2 pr-2 text-[9px] text-red-600">{tab.count}</b>}
              </button>
            ))}
            <div className="ml-auto flex items-center gap-3 pr-2 text-black">
              <button className="flex items-center gap-1"><BagIcon size={16} />Market</button>
              <button className="flex items-center gap-1 text-[#a8a8a8]"><SignalIcon size={16} />Signals</button>
              <button className="flex items-center gap-1"><CloudIcon size={16} />VPS</button>
              <button className="flex items-center gap-1">
                <Icon w={16} h={16}>
                  <path d="M4.500 0v16M7 0v16M9.500 0v16M12 0v16M0 4.500h16M0 7h16M0 9.500h16M0 12h16" />
                  <rect x="2.500" y="2.500" width="11" height="11" rx="1" fill={SKY} />
                </Icon>
                Tester
              </button>
            </div>
          </div>
        </div>
      </div>
    </section>
  );
}

function StatusBar() {
  const cells = [
    ['Default', 'w-32'], ['2022.03.28 12:15', 'w-[98px]'], ['O: 1.24947', 'w-[71px]'], ['H: 1.24973', 'w-[71px]'],
    ['L: 1.24932', 'w-[68px]'], ['C: 1.24964', 'w-[70px]'], ['', 'w-[66px]'],
  ];
  return (
    <footer className="flex h-[21px] shrink-0 items-center border-t border-white bg-[#f0f0f0] text-[11px] whitespace-nowrap">
      <span className="flex-1 pl-0.5">For Help, press F1</span>
      {cells.map(([text, width], i) => (
        <span key={i} className={`flex h-[18px] shrink-0 items-center border-l border-[#8c8c8c] pl-[5px] ${width}`}>{text}</span>
      ))}
      <span className="flex h-[18px] w-[121px] shrink-0 items-center gap-1.5 border-l border-[#8c8c8c] pl-[5px]">
        <Icon w={14} h={12}>
          <path d="M1 9v3M4 7v5M7 4.500v7.500" stroke={GREEN} strokeWidth="2" />
          <path d="M10 2.500v9.500M13 .5v11.500" stroke="#d8d8d8" strokeWidth="2" />
        </Icon>
        11.5 / 0.0 Mb
      </span>
    </footer>
  );
}

function ChromeBall({ x, y, r }: { x: number; y: number; r: number }) {
  return (
    <g transform={`translate(${x} ${y}) scale(${r / 12})`}>
      <circle r="12" fill="#fbc116" />
      <path d="M-10.400-6A12 12 0 0 0 0 12L5.200 3-5.200 3z" fill="#229342" />
      <path d="M-10.400-6L-5.200 3 0 0V-6z" fill="#229342" />
      <path d="M-10.400-6A12 12 0 0 1 10.400-6H0L-5 -2z" fill="#e33b2e" />
      <circle r="5.600" fill="#fff" />
      <circle r="4.400" fill="#3b7de8" />
    </g>
  );
}

function TaskIcon({ label, active, running, children }: { label: string; active?: boolean; running?: boolean; children: React.ReactNode }) {
  return (
    <button aria-label={label} className="flex h-full w-11 shrink-0 items-center justify-center">
      <span className={`relative flex h-10 w-10 items-center justify-center rounded ${active ? 'bg-[#2f2f2f]' : ''}`}>
        {children}
        {active && <span className="absolute bottom-0 h-[3px] w-4 rounded-full bg-[#4cb4f5]" />}
        {running && <span className="absolute bottom-0 h-[3px] w-1.5 rounded-full bg-[#9a9a9a]" />}
      </span>
    </button>
  );
}

function Taskbar() {
  return (
    <footer className="flex h-12 shrink-0 items-center border-t border-[#3a3a3a] bg-[#202020] text-white">
      <button className="flex min-w-0 flex-1 items-center gap-1.5 pl-[18px] text-left text-[11px] leading-4">
        <span className="relative">
          <svg width="26" height="26" viewBox="0 0 26 26" aria-hidden="true">
            <defs>
              <linearGradient id="cloud" x2="0" y2="1"><stop stopColor="#9cc0f5" /><stop offset="1" stopColor="#dfe9fb" /></linearGradient>
              <linearGradient id="drop" x2="0" y2="1"><stop stopColor="#47a4ff" /><stop offset="1" stopColor="#0b5fe0" /></linearGradient>
            </defs>
            <path d="M6 18a5 5 0 0 1 0-10 7 7 0 0 1 13-1 5.500 5.500 0 0 1 1 11z" fill="url(#cloud)" />
            <path d="M12 6c2 3 3 4.500 3 6a3 3 0 0 1-6 0c0-1.500 1-3 3-6zM9 15c2 3 3 4.500 3 6a3 3 0 0 1-6 0c0-1.500 1-3 3-6zM18 14c2.500 3 3.500 5 3.500 7a3.500 3.500 0 0 1-7 0c0-2 1-4 3.500-7z" fill="url(#drop)" />
          </svg>
          <span className="absolute -top-1.5 left-3 flex h-4 w-4 items-center justify-center rounded-full bg-[#c42b1c] text-[11px]">4</span>
        </span>
        <span className="flex flex-col">
          <span>30°C</span>
          <span className="text-[#cfcfcf]">Heavy rain</span>
        </span>
      </button>

      <div className="flex h-full shrink-0 items-center">
        <TaskIcon label="Start">
          <svg width="23" height="23" viewBox="0 0 23 23" aria-hidden="true">
            <defs>
              <linearGradient id="win" x2="1" y2="1"><stop stopColor="#7de6ff" /><stop offset="1" stopColor="#0a8cf0" /></linearGradient>
            </defs>
            <path d="M0 0h11v11H0zM12 0h11v11H12zM0 12h11v11H0zM12 12h11v11H12z" fill="url(#win)" />
          </svg>
        </TaskIcon>
        <label className="ml-[5px] mr-[3px] flex h-[30px] w-[218px] items-center overflow-hidden rounded-full bg-[#f2f2f2] pl-2.5">
          <Icon w={16} h={16}>
            <circle cx="7" cy="7" r="5.500" stroke="#333" strokeWidth="1.500" />
            <path d="M11 11l4 4" stroke="#333" strokeWidth="1.800" />
          </Icon>
          <input type="search" placeholder="Search" aria-label="Search" className="ml-2.5 min-w-0 flex-1 bg-transparent text-[13px] text-[#5f5f5f] outline-none placeholder:text-[#5f5f5f]" />
          <svg width="52" height="26" viewBox="0 0 52 26" className="mr-0.5 shrink-0" aria-hidden="true">
            <defs>
              <linearGradient id="sky" x2="1" y2="0"><stop stopColor="#79b0dc" /><stop offset="1" stopColor="#f1b8a4" /></linearGradient>
              <clipPath id="blob"><path d="M2 16C1 11 5 9 9 8S14 2 20 1s6 1 11 0 10 0 14 3 0 5 3 6 3 7 1 9-4 2-9 4-6 2-14 2-10-2-15-3S3 19 2 16z" /></clipPath>
            </defs>
            <g clipPath="url(#blob)">
              <path d="M0 0h52v26H0z" fill="url(#sky)" />
              <path d="M4 18L18 3l8 10 6 6z" fill="#54749b" />
              <path d="M18 3l8 9-5-1-4 3-1-5-5 2z" fill="#f3f6fa" />
              <path d="M18 3l2 9 6 6h6z" fill="#c7866d" />
              <path d="M27 18l9-9 5 2 10 8z" fill="#7d8dab" />
              <path d="M36 9l4 9 9 1z" fill="#c98972" />
              <path d="M0 18c10-2 40-2 52 0v3H0z" fill="#6b7f3b" />
              <path d="M0 20h52v6H0z" fill="#8fc0e2" />
              <path d="M10 22h28M18 24h20" stroke="#cfe5f5" />
            </g>
          </svg>
        </label>
        <TaskIcon label="Edge">
          <svg width="25" height="25" viewBox="0 0 25 25" aria-hidden="true">
            <defs>
              <linearGradient id="edgeTop" x2="1" y2="0"><stop stopColor="#1ea7e8" /><stop offset="1" stopColor="#63e063" /></linearGradient>
              <linearGradient id="edgeLow" x2="1" y2="1"><stop stopColor="#1b8de0" /><stop offset="1" stopColor="#0a3f96" /></linearGradient>
            </defs>
            <circle cx="12.500" cy="12.500" r="12" fill="url(#edgeLow)" />
            <path d="M.5 12C2 4 7 .5 12.500 .5c7 0 12 5 12 10.500 0 4-3 6.500-6.500 6.500-3 0-4-1-3.500-2 1-1.500 1-4-.5-5.500C11 7 4 7 .5 12z" fill="url(#edgeTop)" />
            <path d="M14.500 15.500c-.5 1 .5 2 3.500 2 2.500 0 5-1.500 6-3.500.5 3 0 4-1 5.500-3 1.500-7 1-9-1-2-2-2.500-4.500-1-7 2 .5 2.500 2.500 1.500 4z" fill="#202020" />
            <path d="M9.500 10c-4 3-3 10 2 13-6-1-9-5-8.500-9 .5-3 3-4.500 6.500-4z" fill="#0f6ac0" />
          </svg>
        </TaskIcon>
        <TaskIcon label="Copilot">
          <svg width="24" height="24" viewBox="0 0 24 24" aria-hidden="true">
            <defs>
              <linearGradient id="copA" x2="0" y2="1"><stop stopColor="#1a6fe8" /><stop offset=".5" stopColor="#22b8c8" /><stop offset="1" stopColor="#e8d02f" /></linearGradient>
              <linearGradient id="copB" x2="0" y2="1"><stop stopColor="#a06cf0" /><stop offset=".5" stopColor="#f0569a" /><stop offset="1" stopColor="#ff9a3c" /></linearGradient>
            </defs>
            <path d="M7 1h8c2 0 2.500 2 3 4h-3c-2 0-2.500 1-3 3l-2 7C9.500 17.500 8 18 6 18H4c-3 0-3.500-3-2.500-6l2-7.500C4.200 2.200 5 1 7 1z" fill="url(#copA)" />
            <path d="M17 23H9c-2 0-2.500-2-3-4h2c2 0 3-1 3.500-3l2-7.500C14 6.500 15.500 6 17.500 6H20c3 0 3.500 3 2.500 6l-2 7.500C19.800 21.800 19 23 17 23z" fill="url(#copB)" />
          </svg>
        </TaskIcon>
        <TaskIcon label="Calculator">
          <svg width="19" height="25" viewBox="0 0 20 25" aria-hidden="true">
            <rect width="20" height="25" rx="1.500" fill="#6b7580" />
            <rect x="2" y="2" width="16" height="5" fill="#5fd3f5" />
            <path d="M2 9h4v4H2zM7 9h4v4H7zM12 9h6v4h-6zM2 14h4v4H2zM7 14h4v4H7zM2 19h4v4H2zM7 19h4v4H7z" fill="#dfe6ec" />
            <path d="M12 14h6v9h-6z" fill="#1b4f93" />
          </svg>
        </TaskIcon>
        <TaskIcon label="File Explorer" running>
          <svg width="26" height="24" viewBox="0 0 26 24" aria-hidden="true">
            <path d="M1 0h9l2 3v5H1z" fill="#d99a16" />
            <path d="M0 5h11l2-2h13v20H0z" fill="#ffcf48" />
            <path d="M5 23v-5a2 2 0 0 1 2-2h12a2 2 0 0 1 2 2v5z" fill="#1b7fd4" />
            <path d="M9 20h8" stroke="#0b5aa0" strokeWidth="2" />
          </svg>
        </TaskIcon>
        <TaskIcon label="Sheets">
          <svg width="25" height="25" viewBox="0 0 25 25" aria-hidden="true">
            <rect width="24" height="25" rx="2" fill="#2fa84f" />
            <path d="M9 3v18M3 9.500h18" stroke="#fff" strokeWidth="3" />
            <ChromeBall x={18.500} y={18.500} r={5.800} />
          </svg>
        </TaskIcon>
        <TaskIcon label="Web app">
          <svg width="25" height="25" viewBox="0 0 25 25" aria-hidden="true">
            <path d="M1 24V10l4-2V3l6-2v5l3 1 4-3v4l6-5v20z" fill="#304f8f" />
            <path d="M2 14l22-5M2 19l22-4M7 6v6" stroke="#1d2b52" strokeWidth="1.500" />
            <ChromeBall x={18.500} y={18.500} r={5.800} />
          </svg>
        </TaskIcon>
        <TaskIcon label="MetaTrader 5" active><MetaLogo size={26} /></TaskIcon>
        <TaskIcon label="Chrome" running>
          <svg width="28" height="30" viewBox="0 0 28 30" aria-hidden="true">
            <ChromeBall x={12.500} y={17} r={12} />
            <circle cx="21" cy="7.500" r="7" fill="#c9ccc8" />
            <path d="M15.500 12c1-3 3-3 5.500-3s5 1 6 3a7 7 0 0 1-11.500 0z" fill="#4a4c4a" />
            <circle cx="21" cy="6.500" r="3" fill="#9a6d56" />
            <path d="M17.500 6c0-5 7-5 7 0-1-2-6-2-7 0zM19 8.500c1 2 3 2 4 0z" fill="#1c1a19" />
          </svg>
        </TaskIcon>
      </div>

      <div className="flex min-w-0 flex-1 items-center justify-end pr-5 text-[11px] leading-4">
        <Icon w={12} h={8} className="mr-[18px]"><path d="M1 7l5-5 5 5" stroke="#fff" strokeWidth="1.400" /></Icon>
        <Icon w={16} h={12} className="mr-4">
          <rect x=".5" y=".5" width="15" height="11" rx="1" stroke="#fff" />
          <path d="M3 3.500h10M3 6h10" stroke="#fff" strokeDasharray="1.500 1.500" />
          <path d="M4.500 8.800h7" stroke="#fff" />
        </Icon>
        <Icon w={15} h={13} className="mr-4">
          <rect x=".5" y=".5" width="14" height="12" rx="1.500" stroke="#fff" />
          <path d="M.5 8h14M7.500 8v4" stroke="#fff" />
        </Icon>
        <Icon w={17} h={18} className="mr-2">
          <path d="M11 1.500H1.500v12h12V9M4 16.500h8M7.500 13.500v3" stroke="#fff" />
          <path d="M12.500 1.500h4v4h-4zM14.500 5.500v10" stroke="#fff" strokeWidth="1.200" />
        </Icon>
        <Icon w={17} h={14} className="mr-[19px]">
          <path d="M1 5h2.500L7 1.500v11L3.500 9H1z" stroke="#fff" />
          <path d="M9 5a3 3 0 0 1 0 4M11.500 3a6 6 0 0 1 0 8M14 1.500a8 8 0 0 1 0 11" stroke="#fff" />
        </Icon>
        <span className="mr-2 flex flex-col text-right">
          <span>3:26 PM</span>
          <span>1/10/2026</span>
        </span>
        <Icon w={15} h={17}>
          <path d="M2.500 11V7a4.500 4.500 0 0 1 9 0v4l2 2.500h-13z" fill="#fff" stroke="#fff" />
          <path d="M5.500 15.500h3" stroke="#fff" strokeWidth="1.500" />
          <path d="M5.500 6.500h3l-3 4h3" stroke="#202020" strokeWidth="1.200" />
          <path d="M10 1.500h4l-4 4.500h4" stroke="#202020" strokeWidth="3" />
          <path d="M10.500 1.500h3l-3 4h3" stroke="#fff" strokeWidth="1.200" />
        </Icon>
      </div>
    </footer>
  );
}

export default function App() {
  return (
    <div className="flex min-h-screen flex-col overflow-hidden bg-[#f0f0f0] font-['Open_Sans','Noto_Sans',sans-serif] text-black">
      <TitleBar />
      <MenuBar />
      <div className="shrink-0 border-t border-white pt-px">
        <MainToolbar />
        <DrawingToolbar />
      </div>
      <main className="flex flex-1 pt-px">
        <aside className="flex w-[136px] shrink-0 flex-col">
          <MarketWatch />
          <Navigator />
        </aside>
        <ChartWindow />
      </main>
      <Toolbox />
      <StatusBar />
      <Taskbar />
    </div>
  );
}
